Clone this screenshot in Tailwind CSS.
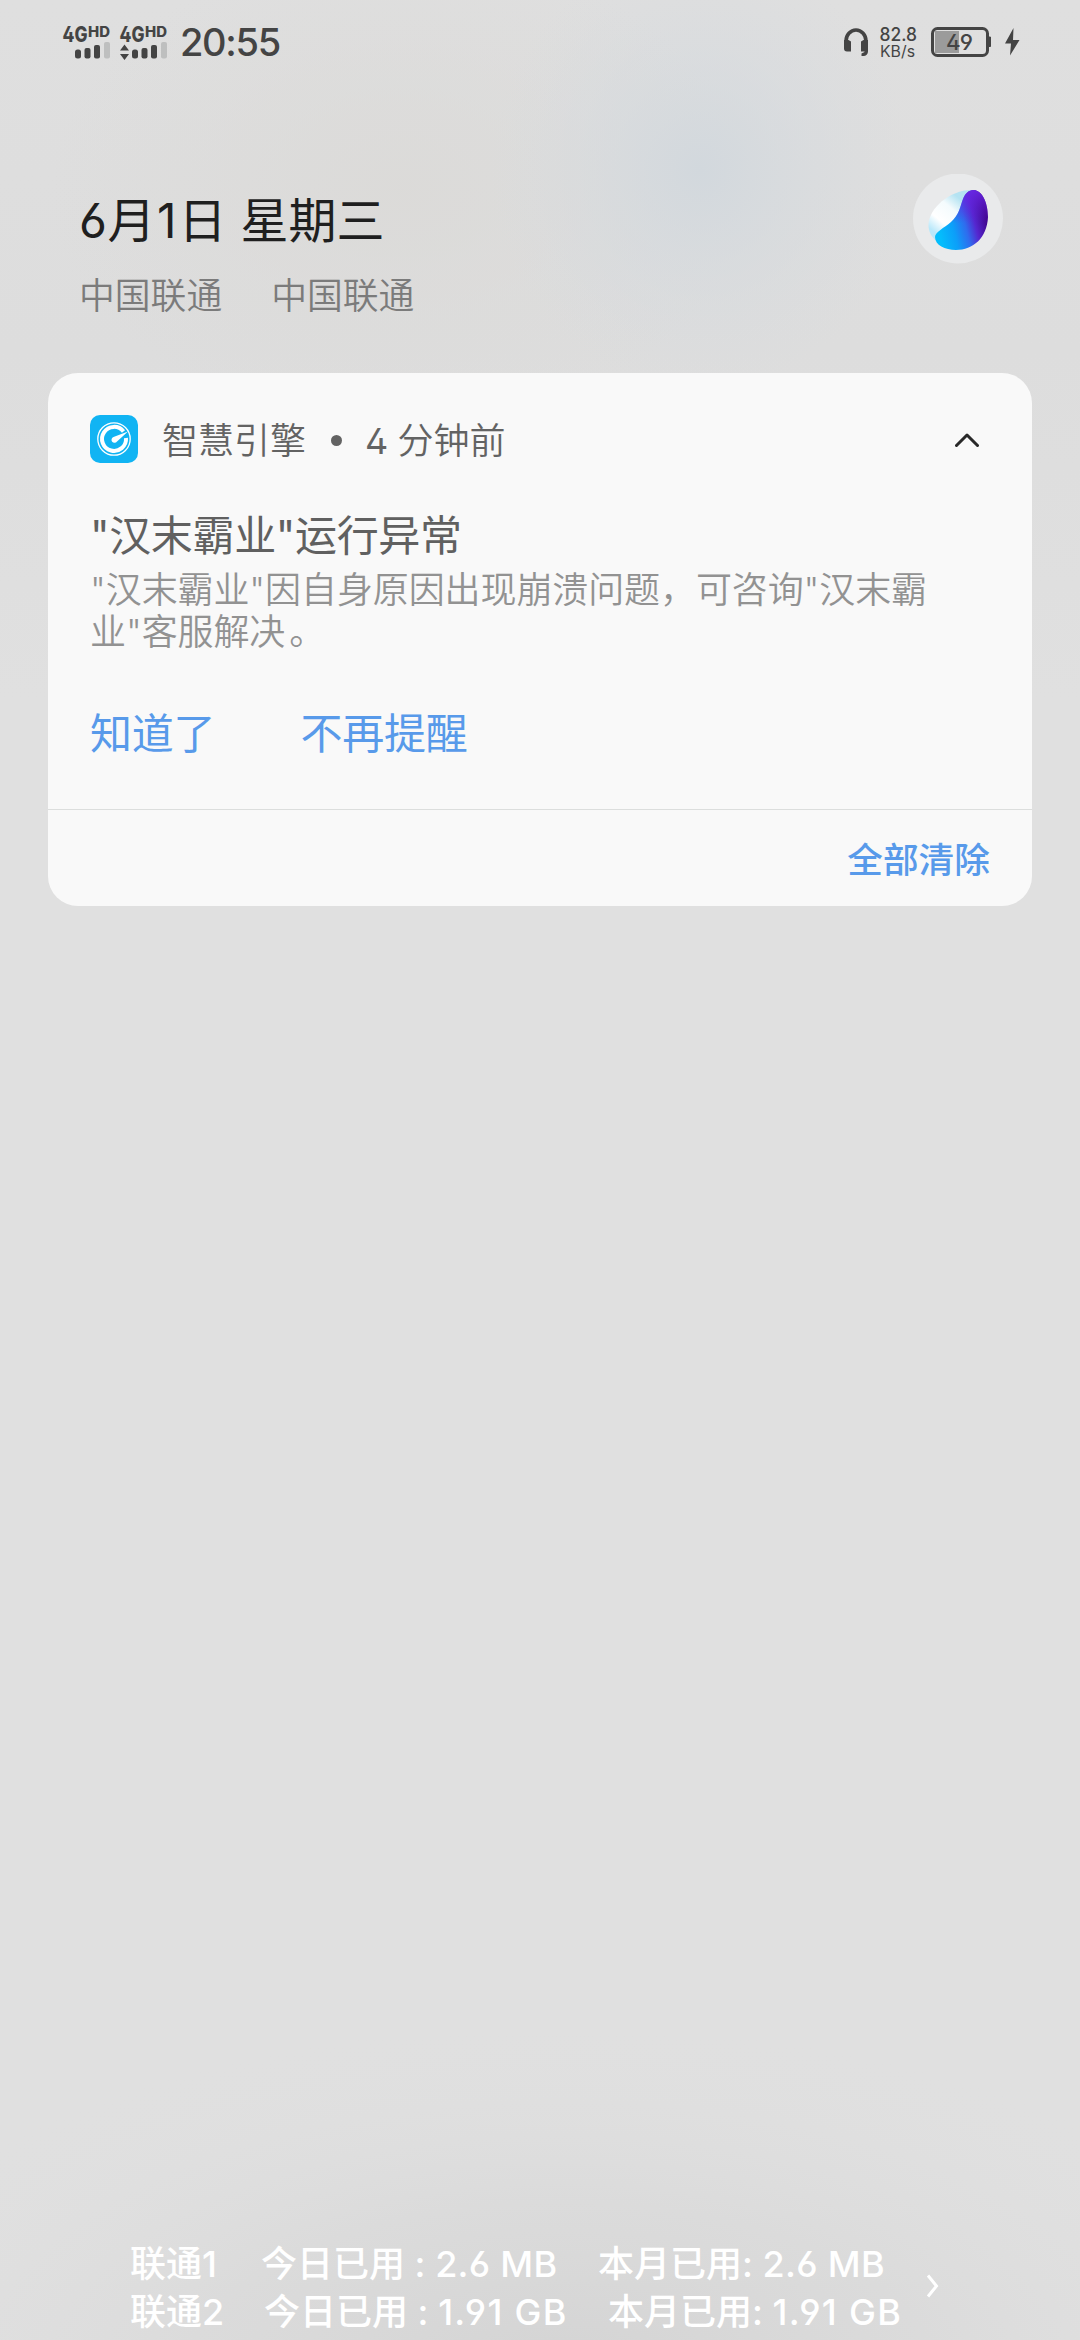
<!DOCTYPE html>
<html lang="zh-CN">
<head>
<meta charset="utf-8">
<title>通知中心</title>
<script src="https://cdn.jsdelivr.net/npm/@tailwindcss/browser@4"></script>
</head>
<body class="bg-[#e0e0e0]">
<div class="relative isolate flex h-[2340px] w-[1080px] flex-col overflow-hidden bg-[#e0e0e0] font-[Inter,'Noto_Sans_CJK_SC',sans-serif] whitespace-nowrap [font-feature-settings:'ss01'_1]">
  <!-- Blurred wallpaper -->
  <svg class="absolute inset-0 -z-10" width="1080" height="2340" viewBox="0 0 1080 2340">
    <defs>
      <linearGradient id="top" x1="0" y1="0" x2="0" y2="1"><stop offset="0" stop-color="#dfdfdf"/><stop offset=".5" stop-color="#dddddd"/><stop offset="1" stop-color="#e0e0e0"/></linearGradient>
      <radialGradient id="warm"><stop offset="0" stop-color="#dbdad8" stop-opacity=".9"/><stop offset="1" stop-color="#dbdad8" stop-opacity="0"/></radialGradient>
      <radialGradient id="blue"><stop offset="0" stop-color="#d2d8dd"/><stop offset="1" stop-color="#d7dbdf" stop-opacity="0"/></radialGradient>
      <radialGradient id="low"><stop offset="0" stop-color="#d3d3d3"/><stop offset=".5" stop-color="#d9d9d9" stop-opacity=".7"/><stop offset="1" stop-color="#e0e0e0" stop-opacity="0"/></radialGradient>
    </defs>
    <rect width="1080" height="700" fill="url(#top)"/>
    <ellipse cx="400" cy="190" rx="350" ry="240" fill="url(#warm)"/>
    <ellipse cx="700" cy="170" rx="210" ry="220" fill="url(#blue)"/>
    <ellipse cx="560" cy="2380" rx="760" ry="360" fill="url(#low)"/>
  </svg>

  <!-- Status bar -->
  <header class="flex h-[84px] items-center justify-between pr-[57px] pl-[60px] text-[#444]">
    <div class="flex items-center">
      <svg width="112" height="40" viewBox="60 20 112 40" fill="#444" font-family="Inter, sans-serif" font-weight="800">
        <text x="62.500" y="40" font-size="21"><tspan textLength="25" lengthAdjust="spacingAndGlyphs">4G</tspan><tspan x="88" y="35" font-size="14" textLength="22" lengthAdjust="spacingAndGlyphs">HD</tspan></text>
        <rect x="75" y="47.500" width="6" height="9" rx="2.500"/><rect x="84.500" y="46" width="6" height="10.500" rx="2"/><rect x="94" y="43" width="6" height="13.500" rx="2"/><rect x="104" y="40" width="6" height="16.500" rx="2" fill="#bebfbf"/>
        <text x="119.500" y="40" font-size="21"><tspan textLength="25" lengthAdjust="spacingAndGlyphs">4G</tspan><tspan x="145" y="35" font-size="14" textLength="22" lengthAdjust="spacingAndGlyphs">HD</tspan></text>
        <path d="M124.500 42.500l4.500 6h-9zM124.500 58l4.500-6h-9z"/>
        <rect x="132" y="47.500" width="6" height="9" rx="2.500"/><rect x="141.500" y="46" width="6" height="10.500" rx="2"/><rect x="151" y="43" width="6" height="13.500" rx="2"/><rect x="161" y="40" width="6" height="16.500" rx="2" fill="#bebfbf"/>
      </svg>
      <span class="ml-2 text-[38px] leading-10 font-medium tracking-[-1.3px]">20:55</span>
    </div>
    <svg width="182" height="40" viewBox="840 22 182 40" fill="#444" font-family="Inter, sans-serif">
      <path d="M845 43v-2a10 11 0 0 1 20 0v2" fill="none" stroke="#444" stroke-width="3.600"/>
      <path d="M843 40h4.500l2.500 1.500v10h-4a3 3 0 0 1-3-3zM867 40h-4.500l-2.500 1.500v10h3.500v.5l-3 1.500v2.500h2a4.500 4.500 0 0 0 4.500-4.500z"/>
      <text x="878.500" y="41" font-size="18" font-weight="500" textLength="37.500" lengthAdjust="spacingAndGlyphs">82.8</text>
      <text x="879" y="56.500" font-size="15.500" textLength="35" lengthAdjust="spacingAndGlyphs">KB/s</text>
      <rect x="931.500" y="28.500" width="55" height="27" rx="5" fill="none" stroke="#444" stroke-width="3"/>
      <path d="M934 31h24v22h-24z" fill="#9b9b9b"/>
      <path d="M988 37h1.500v9.500H988z" stroke="#444" stroke-width="1"/>
      <text x="945" y="50" font-size="22" font-weight="500" textLength="27" lengthAdjust="spacingAndGlyphs">49</text>
      <path d="M1012.500 28l-8.500 15.500h6l-1 12 9.500-15.500h-6.500z"/>
    </svg>
  </header>

  <!-- Date and carriers -->
  <section class="flex h-[289px] justify-between pt-[90px] pr-[77px] pl-[79px]">
    <div>
      <h1 class="h-[95px] pt-[17px] text-[48px] leading-[60px] text-[#1f1f1f]"><span class="tracking-[.5px]">6月</span><span class="mr-[2px] ml-[1px]">1</span>日<span class="ml-[14px]">星期三</span></h1>
      <p class="flex gap-[49px] text-[35.8px] leading-[54px] font-[350] text-[#7b7b7b]"><span>中国联通</span><span>中国联通</span></p>
    </div>
    <svg width="90" height="90" viewBox="0 0 90 90">
      <defs>
        <linearGradient id="w" x1=".1" y1=".8" x2=".6" y2=".1"><stop offset="0" stop-color="#b9e8fa"/><stop offset=".3" stop-color="#fff"/><stop offset=".7" stop-color="#f4fbfd"/><stop offset="1" stop-color="#b5e3f2"/></linearGradient>
        <linearGradient id="v" gradientUnits="userSpaceOnUse" x1="27" y1="62" x2="75" y2="50"><stop offset="0" stop-color="#04bdfc"/><stop offset=".3" stop-color="#0c9ff9"/><stop offset=".55" stop-color="#2f6cee"/><stop offset=".75" stop-color="#5526cf"/><stop offset="1" stop-color="#40058c"/></linearGradient>
        <linearGradient id="t" x1="0" y1="0" x2="0" y2="1"><stop offset="0" stop-color="#6a28e8" stop-opacity=".9"/><stop offset=".55" stop-color="#6420d8" stop-opacity="0"/></linearGradient>
      </defs>
      <circle cx="45" cy="44.500" r="45" fill="#e9eaeb"/>
      <path d="M60 16C38 15 15.500 34 15.500 51c0 7 3 12 8 16l28-24z" fill="url(#w)"/>
      <path d="M61 16C70 17 75 30 75 43 74 64 60 76 43 76 32 76 22 71 22 63 22 58 31 54 38 48 46 41 47 33 50 25 52 20 55 16 61 16Z" fill="url(#v)"/>
      <path d="M61 16C70 17 75 30 75 43 74 64 60 76 43 76 32 76 22 71 22 63 22 58 31 54 38 48 46 41 47 33 50 25 52 20 55 16 61 16Z" fill="url(#t)"/>
    </svg>
  </section>

  <!-- Notification -->
  <main class="mx-12 h-[533px] rounded-[30px] bg-[#f9f9f9]">
    <div class="flex h-[134px] items-center pr-[53px] pl-[42px] text-[36px] leading-[54px] font-[350] text-[#636363]">
      <svg class="-mt-0.5" width="48" height="48" viewBox="0 0 48 48" fill="none" stroke="#fff">
        <rect width="48" height="48" rx="10" fill="#11b4f3" stroke="none"/>
        <circle cx="24" cy="24" r="16.200" stroke-width="1.300"/>
        <path d="M33.500 16.500A12 12 0 1 0 36 23" stroke-width="4"/>
        <path d="M38 16.500L27 26.500a3 3 0 1 1-3.500-4.500z" fill="#fff" stroke="none"/>
      </svg>
      <span class="mt-0.5 ml-6">智慧引擎</span>
      <span class="ml-[25px] size-[11px] rounded-full bg-[#636363]"></span>
      <span class="mt-0.5 ml-[23px]"><span class="font-normal tracking-[-.5px]">4 </span>分钟前</span>
      <svg class="ml-auto" width="24" height="15" viewBox="0 0 24 15" fill="none" stroke="#292929" stroke-width="3" stroke-linecap="round" stroke-linejoin="round"><path d="M1.500 12.500L12 2l10.500 10.500"/></svg>
    </div>
    <div class="h-[302px] px-[42px]">
      <h2 class="text-[42px] leading-[58px] tracking-[-.35px] text-[#606060]">"汉末霸业"运行异常</h2>
      <p class="pt-[4px] text-[36px] leading-[42px] font-[350] tracking-[-.1px] text-[#929292]">"汉末霸业"因自身原因出现崩溃问题，可咨询"汉末霸<br>业"客服解决<span class="ml-1">。</span></p>
      <div class="mt-[51px] flex gap-[85px] text-[42px] leading-[60px] tracking-[-.2px] text-[#589aea]"><span>知道了</span><span>不再提醒</span></div>
    </div>
    <div class="flex h-[97px] items-center justify-end border-t border-[#dcdedd] pt-[3px] pr-[42px] text-[35.7px] leading-[54px] font-medium text-[#589aea]">全部清除</div>
  </main>

  <!-- Data usage -->
  <footer class="mt-auto mb-[4px] flex items-center pl-[130px] text-[36px] leading-[48px] font-medium text-white">
    <div>
      <div class="flex"><span class="w-[131px]">联通1</span><span class="w-[337px]">今日已用 : <span class="tracking-[.3px]">2.6 MB</span></span><span>本月已用: <span class="tracking-[.3px]">2.6 MB</span></span></div>
      <div class="flex"><span class="w-[134px]">联通2</span><span class="w-[344px]">今日已用 : <span class="tracking-[1.3px]">1.91 GB</span></span><span>本月已用: <span class="tracking-[1.3px]">1.91 GB</span></span></div>
    </div>
    <svg class="-mt-1 ml-6" width="14" height="24" viewBox="0 0 14 24" fill="none" stroke="#fff" stroke-width="3"><path d="M2 1.500L10.500 12 2 22.500"/></svg>
  </footer>
</div>
</body>
</html>
